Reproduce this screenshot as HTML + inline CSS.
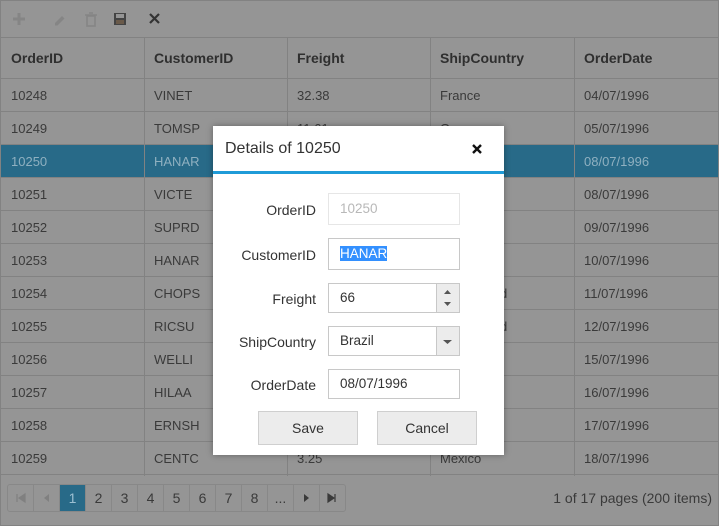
<!DOCTYPE html>
<html><head><meta charset="utf-8"><style>
*{box-sizing:border-box;margin:0;padding:0}
body{width:719px;height:526px;overflow:hidden;background:#959595;font-family:"Liberation Sans",sans-serif;font-size:13px;color:#3a3a3a;position:relative}
.abs{position:absolute}
.frame{left:0;top:0;width:719px;height:526px;border:1px solid #828282}
.hline{position:absolute;left:0;width:719px;height:1px;background:#828282}
.vline{position:absolute;top:38px;width:1px;height:438px;background:#828282}
.cell{position:absolute;white-space:nowrap}
.hd{font-weight:bold;font-size:14px;color:#2f2f2f}
.sel{position:absolute;left:1px;top:145px;width:717px;height:32px;background:#286a88}
.dlg{position:absolute;left:213px;top:126px;width:291px;height:329px;background:#fff;box-shadow:0 0 6px rgba(0,0,0,.35)}
.lbl{position:absolute;right:188px;font-size:14px;color:#333;text-align:right}
.inp{position:absolute;left:115px;width:132px;border:1px solid #c8c8c8;background:#fff;font-size:13.5px;color:#333;padding-left:11px}
.btn{position:absolute;top:285px;width:100px;height:34px;background:#ececec;border:1px solid #cfcfcf;font-size:14px;color:#333;text-align:center;line-height:32px}
.pg{position:absolute;top:485px;height:26px;border-left:1px solid #888;text-align:center;line-height:26px;font-size:14px;color:#3a3a3a}
</style></head><body>
<div class="abs frame"></div>
<svg class="abs" style="left:10px;top:10px" width="160" height="18">
<path d="M3 9h12M9 3v12" stroke="#858585" stroke-width="3"/>
<path d="M45 13l7-7 2.5 2.5-7 7h-2.5z" fill="#858585"/>
<path d="M75 5h12M79 3h4" stroke="#858585" stroke-width="1.6"/><rect x="77" y="6" width="8" height="10" fill="none" stroke="#858585" stroke-width="1.6"/>
<rect x="104" y="3" width="12" height="12" fill="#444"/><rect x="106" y="4" width="8" height="4" fill="#959595"/><rect x="106" y="10" width="8" height="4" fill="#6a5a4a"/>
<path d="M140 4l9 9M149 4l-9 9" stroke="#333" stroke-width="2.2"/>
</svg>
<div class="hline" style="top:37px"></div>
<div class="hline" style="top:78px"></div>
<div class="sel"></div>
<div id="grid"></div>
<div class="vline" style="left:144px"></div><div class="vline" style="left:287px"></div><div class="vline" style="left:430px"></div><div class="vline" style="left:574px"></div>
<div class="cell hd" style="left:11px;top:50px">OrderID</div>
<div class="cell hd" style="left:154px;top:50px">CustomerID</div>
<div class="cell hd" style="left:297px;top:50px">Freight</div>
<div class="cell hd" style="left:440px;top:50px">ShipCountry</div>
<div class="cell hd" style="left:584px;top:50px">OrderDate</div>
<script>
var r=[["10248","VINET","32.38","France","04/07/1996"],["10249","TOMSP","11.61","Germany","05/07/1996"],["10250","HANAR","65.83","Brazil","08/07/1996"],["10251","VICTE","41.34","France","08/07/1996"],["10252","SUPRD","51.30","Belgium","09/07/1996"],["10253","HANAR","58.17","Brazil","10/07/1996"],["10254","CHOPS","22.98","Switzerland","11/07/1996"],["10255","RICSU","148.33","Switzerland","12/07/1996"],["10256","WELLI","13.97","Brazil","15/07/1996"],["10257","HILAA","81.91","Venezuela","16/07/1996"],["10258","ERNSH","140.51","Austria","17/07/1996"],["10259","CENTC","3.25","Mexico","18/07/1996"]];
var xs=[11,154,297,440,584],h="";
for(var i=0;i<12;i++){var t=79+i*33;h+='<div class="hline" style="top:'+(t+32)+'px"></div>';
for(var j=0;j<5;j++)h+='<div class="cell" style="left:'+xs[j]+'px;top:'+(t+9)+'px;'+(i==2?'color:#8fb0c0':'')+'">'+r[i][j]+'</div>';}
document.getElementById('grid').innerHTML=h;
</script>
<div class="abs" style="left:7px;top:484px;width:339px;height:28px;border:1px solid #888;border-radius:3px"></div>
<div id="pgr"></div>
<script>
var l=["","","1","2","3","4","5","6","7","8","...","",""],x=7,p="";
for(var k=0;k<13;k++){p+='<div class="pg" style="left:'+x+'px;width:26px;'+(k==0?'border-left:none;':'')+(k==2?'background:#286a88;color:#9cc0d2;':'')+(k<2?'color:#7e7e7e;':'')+'">'+l[k]+'</div>';x+=26;}
document.getElementById('pgr').innerHTML=p;
</script>
<svg class="abs" style="left:7px;top:485px" width="340" height="26">
<path d="M10 9v8M18 9l-6 4 6 4z" fill="#808080" stroke="#808080" stroke-width="1.2"/>
<path d="M42 9l-5 4 5 4z" fill="#808080"/>
<path d="M297 9l5 4-5 4z" fill="#3a3a3a"/>
<path d="M321 9l6 4-6 4zM328 9v8" fill="#3a3a3a" stroke="#3a3a3a" stroke-width="1.2"/>
</svg>
<div class="cell" style="right:7px;top:490px;font-size:14px">1 of 17 pages (200 items)</div>
<div class="dlg">
<div class="cell" style="left:12px;top:14px;font-size:16px;color:#333">Details of 10250</div>
<svg class="abs" style="left:258px;top:17px" width="12" height="12"><path d="M2 2l8 8M10 2l-8 8" stroke="#111" stroke-width="2.4"/></svg>
<div class="abs" style="left:0;top:45px;width:291px;height:3px;background:#1f9bd8"></div>
<div class="lbl" style="top:76px">OrderID</div>
<div class="inp" style="top:67px;height:32px;border-color:#e6e6e6;color:#b8b8b8;line-height:30px">10250</div>
<div class="lbl" style="top:121px">CustomerID</div>
<div class="inp" style="top:112px;height:32px;line-height:30px"><span style="background:#3390ff;color:#fff">HANAR</span></div>
<div class="lbl" style="top:165px">Freight</div>
<div class="inp" style="top:157px;height:30px;line-height:28px">66
<div class="abs" style="right:0;top:0;width:23px;height:28px;background:#ececec;border-left:1px solid #c8c8c8"></div>
<svg class="abs" style="right:0;top:0" width="23" height="28"><path d="M8 10l3.5-4 3.5 4zM8 18l3.5 4 3.5-4z" fill="#555"/></svg></div>
<div class="lbl" style="top:208px">ShipCountry</div>
<div class="inp" style="top:200px;height:30px;line-height:28px">Brazil
<div class="abs" style="right:0;top:0;width:23px;height:28px;background:#ececec;border-left:1px solid #c8c8c8"></div>
<svg class="abs" style="right:0;top:0" width="23" height="28"><path d="M7 13l4.5 4 4.5-4z" fill="#555"/></svg></div>
<div class="lbl" style="top:251px">OrderDate</div>
<div class="inp" style="top:243px;height:30px;line-height:28px">08/07/1996</div>
<div class="btn" style="left:45px">Save</div>
<div class="btn" style="left:164px">Cancel</div>
</div>
</body></html>
